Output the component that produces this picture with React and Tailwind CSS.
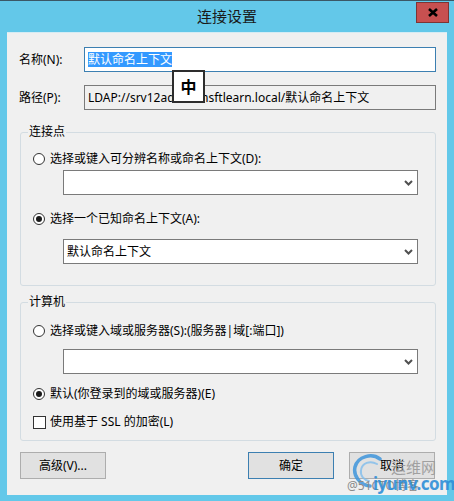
import React from "react";

const Chevron = () => (
  <svg width="9" height="6" viewBox="0 0 9 6" className="shrink-0">
    <polyline points="1,1 4.5,4.5 8,1" fill="none" stroke="#505050" strokeWidth="2" />
  </svg>
);

const Combo = ({ value }) => (
  <div className="ml-[42px] w-[355px] h-[25px] bg-white border border-[#7a7a7a] flex items-center pl-[3px] pr-[4px]">
    <span className="flex-1 text-[12px]">{value}</span>
    <Chevron />
  </div>
);

const Radio = ({ checked, label, className }) => (
  <div className={"flex items-center h-[16px] pl-[12px] " + (className || "")}>
    <span className="w-[12px] h-[12px] rounded-full border border-[#333] bg-white flex items-center justify-center">
      {checked && <span className="w-[6px] h-[6px] rounded-full bg-[#1a1a1a]" />}
    </span>
    <span className="ml-[5px] text-[12px] leading-[16px]">{label}</span>
  </div>
);

const Legend = ({ children }) => (
  <div className="-mt-[9px] ml-[7px] px-[1px] w-fit bg-[#f0f0f0] text-[12px] leading-[16px]">
    {children}
  </div>
);

const Button = ({ children, primary, className }) => (
  <div
    className={
      "w-[86px] h-[27px] flex items-center justify-center text-[12px] bg-[#e1e1e1] border " +
      (primary ? "border-[#3c7fb1] " : "border-[#adadad] ") +
      (className || "")
    }
  >
    {children}
  </div>
);

export default function App() {
  return (
    <div className="relative w-[454px] h-[501px] bg-[#63c8e9] border-t border-[#3b5866] overflow-hidden text-black font-['Noto_Sans','Noto_Sans_CJK_SC',sans-serif]">
      {/* title bar */}
      <div className="grid grid-cols-[1fr_auto_1fr] h-[31px] items-start">
        <div />
        <div className="h-[31px] flex items-center text-[15px] text-[#1a1a1a]">连接设置</div>
        <div className="flex justify-end pr-[5px] pt-[1px]">
          <div className="w-[33px] h-[21px] bg-[#c75050] border border-[#7d3434] flex items-center justify-center">
            <svg width="10" height="9" viewBox="0 0 10 9">
              <path d="M1 1 L9 8 M9 1 L1 8" stroke="#000" strokeWidth="2.6" />
            </svg>
          </div>
        </div>
      </div>

      {/* content */}
      <div className="relative mx-[7px] h-[463px] bg-[#f0f0f0] border-t border-[#d6ecf4] flex flex-col">
        <div className="mt-[14px] flex items-center h-[25px] pl-[12px]">
          <span className="w-[65px] text-[12px]">名称(N):</span>
          <div className="w-[352px] h-[25px] bg-white border border-[#3c7fb1] flex items-center pl-[3px]">
            <span className="bg-[#3399ff] text-white text-[12px] leading-[15px]">默认命名上下文</span>
          </div>
        </div>
        <div className="mt-[13px] flex items-center h-[25px] pl-[12px]">
          <span className="w-[65px] text-[12px]">路径(P):</span>
          <div className="w-[352px] h-[25px] bg-[#f0f0f0] border border-[#7a7a7a] flex items-center pl-[3px] text-[12px] whitespace-nowrap overflow-hidden">
            LDAP://srv12adc01.msftlearn.local/默认命名上下文
          </div>
        </div>

        {/* group 1 */}
        <div className="mt-[22px] ml-[13px] w-[416px] h-[154px] border border-[#d3dce2] rounded-[3px] flex flex-col">
          <Legend>连接点</Legend>
          <Radio className="mt-[11px]" label="选择或键入可分辨名称或命名上下文(D):" />
          <div className="mt-[3px]">
            <Combo value="" />
          </div>
          <Radio className="mt-[16px]" checked label="选择一个已知命名上下文(A):" />
          <div className="mt-[12px]">
            <Combo value="默认命名上下文" />
          </div>
        </div>

        {/* group 2 */}
        <div className="mt-[16px] ml-[13px] w-[416px] h-[139px] border border-[#d3dce2] rounded-[3px] flex flex-col">
          <Legend>计算机</Legend>
          <Radio className="mt-[13px]" label="选择或键入域或服务器(S):(服务器|域[:端口])" />
          <div className="mt-[10px]">
            <Combo value="" />
          </div>
          <Radio className="mt-[12px]" checked label="默认(你登录到的域或服务器)(E)" />
          <div className="mt-[12px] flex items-center h-[16px] pl-[12px]">
            <span className="w-[13px] h-[13px] border border-[#333] bg-white" />
            <span className="ml-[4px] text-[12px] leading-[16px]">使用基于 SSL 的加密(L)</span>
          </div>
        </div>

        {/* buttons */}
        <div className="mt-[11px] flex items-center pr-[12px]">
          <Button className="ml-[13px]">高级(V)...</Button>
          <Button primary className="ml-auto">确定</Button>
          <Button className="ml-[15px]">取消</Button>
        </div>

        {/* IME indicator */}
        <div className="absolute left-[165px] top-[37px] w-[33px] h-[33px] bg-white border-2 border-[#2d2d2d] flex items-center justify-center text-[16px] font-bold">
          中
        </div>
      </div>

      {/* watermark */}
      <div className="absolute left-[340px] top-[450px] w-[114px] h-[51px] pointer-events-none">
        <svg width="40" height="36" viewBox="0 0 40 36" className="absolute left-[10px] top-[2px]">
          <path d="M30 6 C22 0 8 3 5 14 C3 23 10 32 20 33" fill="none" stroke="#3d94db" strokeWidth="3.5" strokeLinecap="round" opacity="0.85" />
          <path d="M27 11 C20 7 12 10 11 17 C10 23 14 27 19 28" fill="none" stroke="#7fbdec" strokeWidth="2" strokeLinecap="round" opacity="0.8" />
        </svg>
        <div className="absolute left-[51px] top-[8px] text-[15px] leading-[16px] text-[#9a9a9a] opacity-90">运维网</div>
        <div className="absolute left-[7px] top-[28px] text-[12px] leading-[14px] text-[#8a8a8a]">@51CTO博客</div>
        <div className="absolute left-[33px] top-[23px] text-[17px] leading-[20px] font-bold text-[#2f8fd8] tracking-[-0.5px] opacity-90">iyunv.com</div>
      </div>
    </div>
  );
}
